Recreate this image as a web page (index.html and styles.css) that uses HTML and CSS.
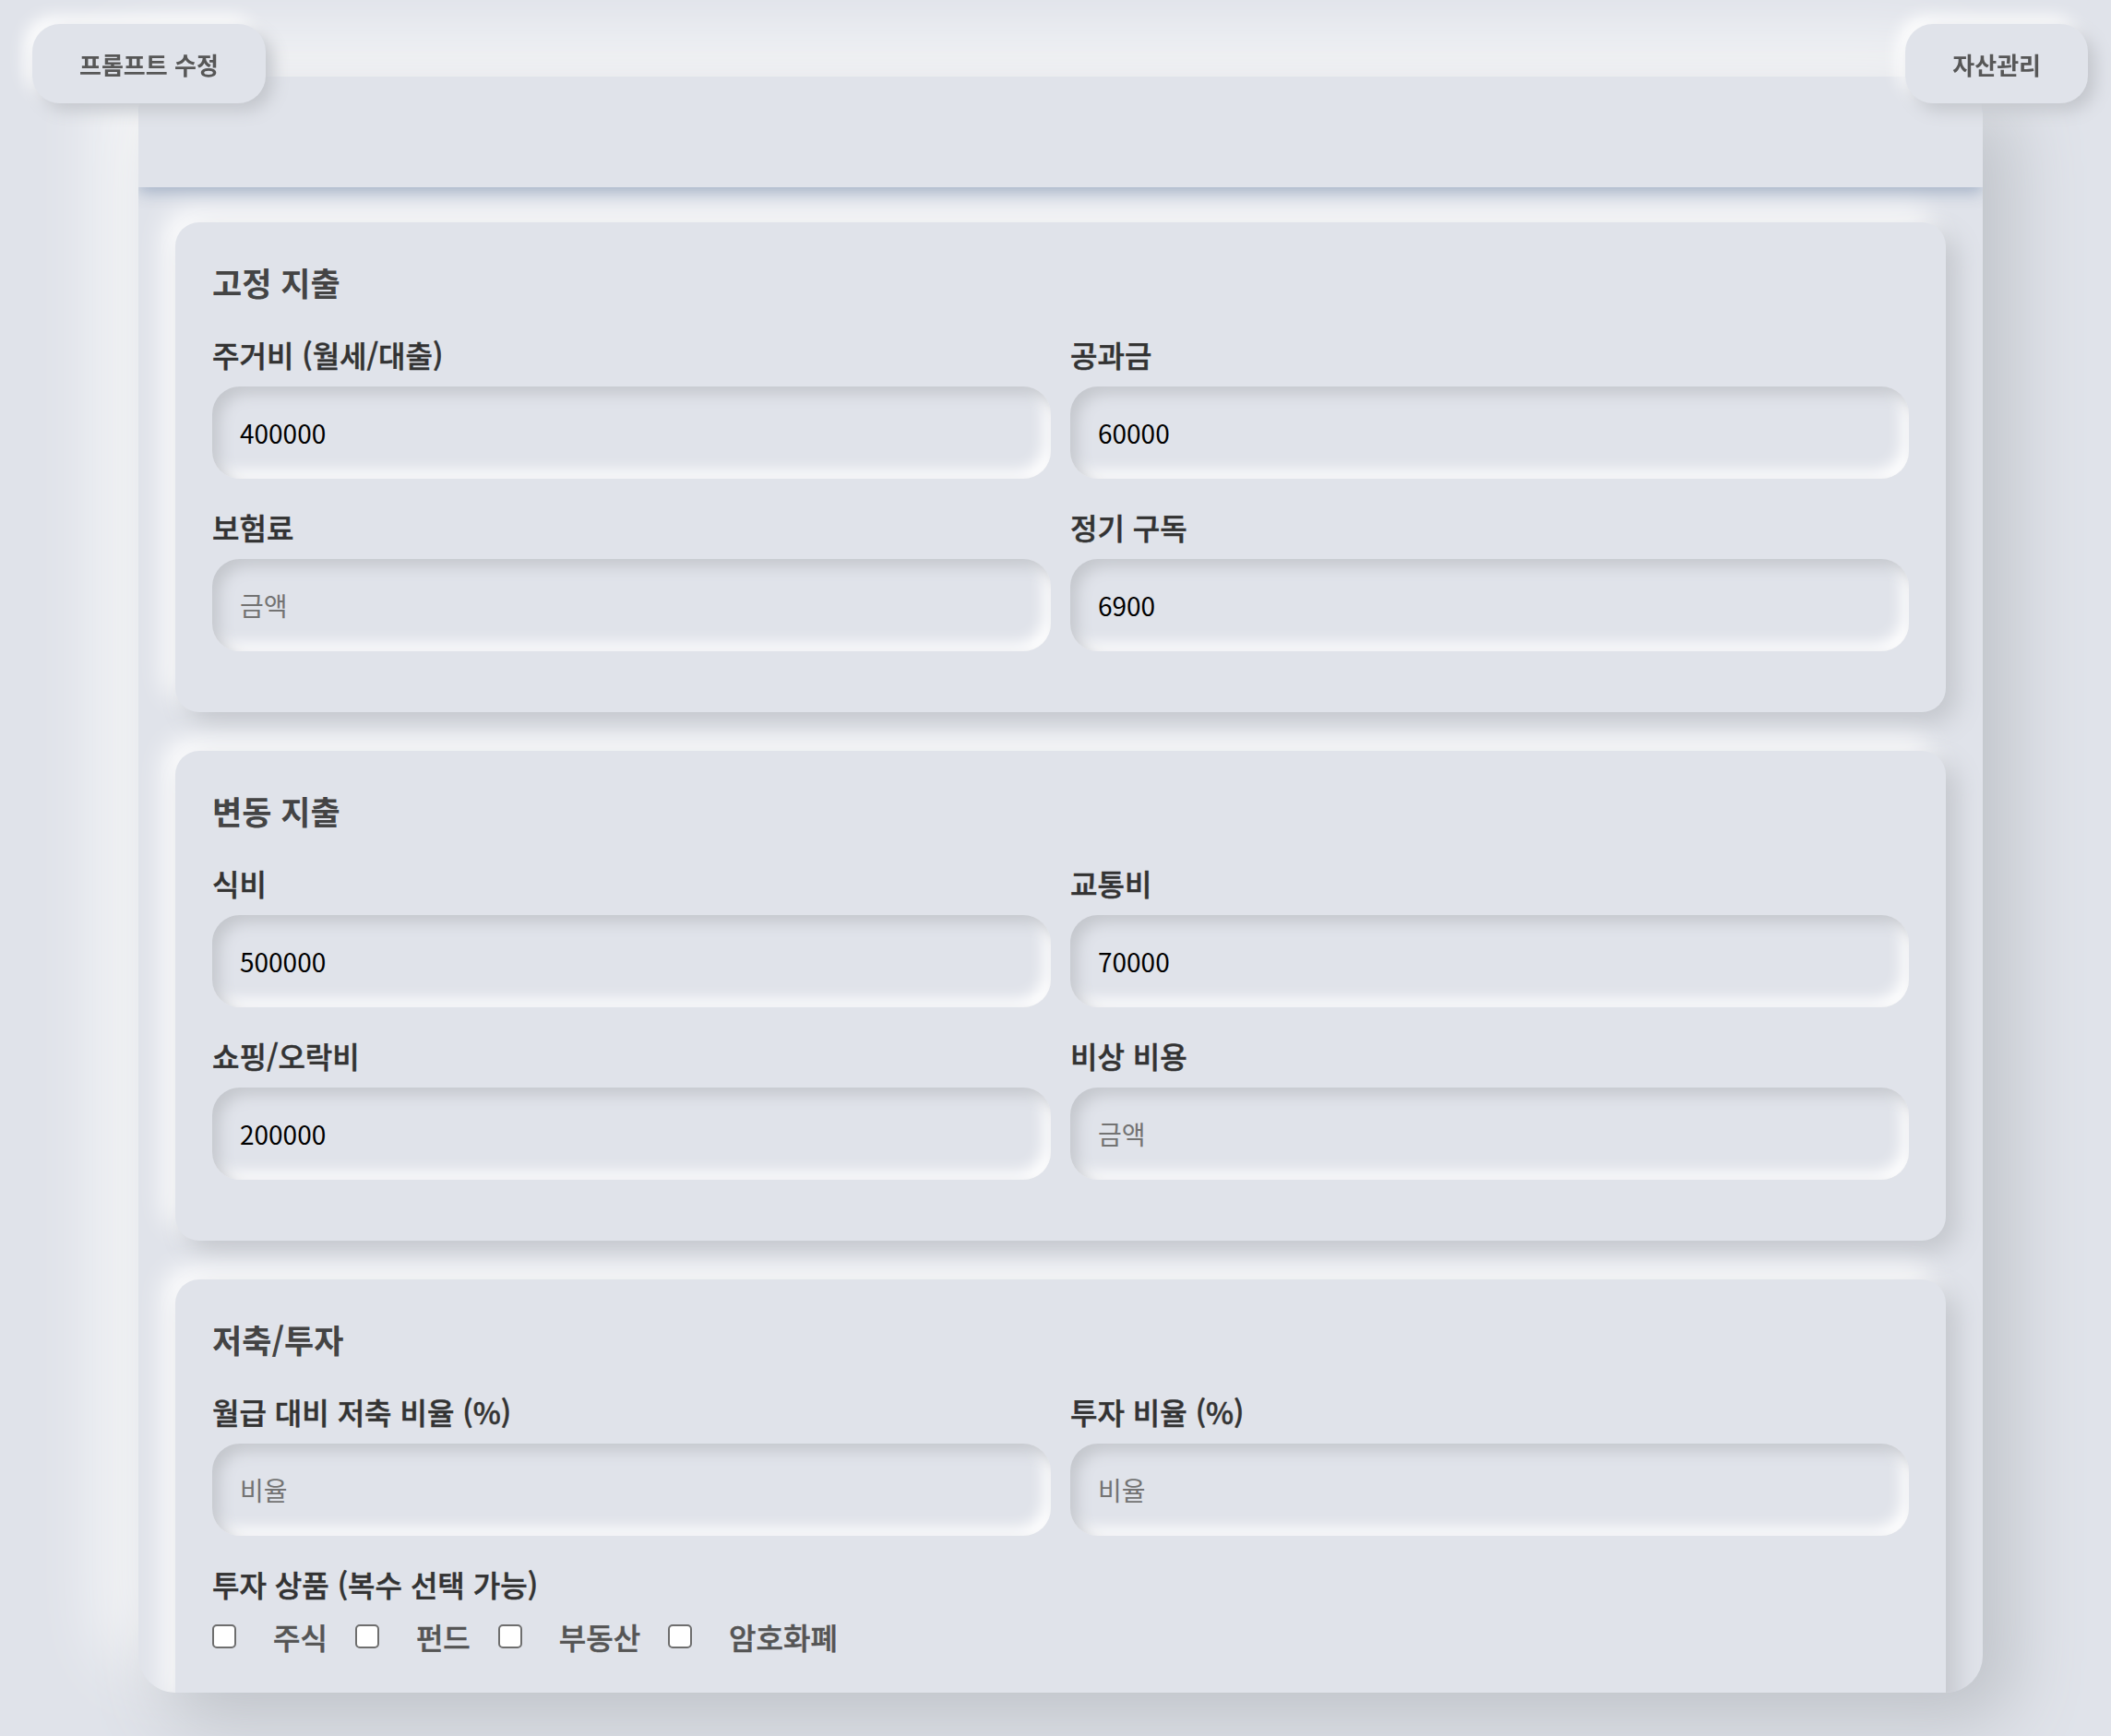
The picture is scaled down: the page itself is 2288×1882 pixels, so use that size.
FILE: index.html
```html
<!DOCTYPE html>
<html lang="ko">
<head>
<meta charset="utf-8">
<title>지출 관리</title>
<link rel="stylesheet" href="styles.css">
</head>
<body>
<button class="nav-btn nav-left" type="button">프롬프트 수정</button>
<button class="nav-btn nav-right" type="button">자산관리</button>
<main class="panel">
  <header class="panel-header"></header>
  <div class="panel-body">
    <section class="card">
      <h3 class="card-title">고정 지출</h3>
      <div class="grid">
        <div class="field">
          <label class="field-label">주거비 (월세/대출)</label>
          <input class="text-input" type="text" value="400000" placeholder="금액">
        </div>
        <div class="field">
          <label class="field-label">공과금</label>
          <input class="text-input" type="text" value="60000" placeholder="금액">
        </div>
        <div class="field">
          <label class="field-label">보험료</label>
          <input class="text-input" type="text" value="" placeholder="금액">
        </div>
        <div class="field">
          <label class="field-label">정기 구독</label>
          <input class="text-input" type="text" value="6900" placeholder="금액">
        </div>
      </div>
    </section>

    <section class="card">
      <h3 class="card-title">변동 지출</h3>
      <div class="grid">
        <div class="field">
          <label class="field-label">식비</label>
          <input class="text-input" type="text" value="500000" placeholder="금액">
        </div>
        <div class="field">
          <label class="field-label">교통비</label>
          <input class="text-input" type="text" value="70000" placeholder="금액">
        </div>
        <div class="field">
          <label class="field-label">쇼핑/오락비</label>
          <input class="text-input" type="text" value="200000" placeholder="금액">
        </div>
        <div class="field">
          <label class="field-label">비상 비용</label>
          <input class="text-input" type="text" value="" placeholder="금액">
        </div>
      </div>
    </section>

    <section class="card">
      <h3 class="card-title">저축/투자</h3>
      <div class="grid">
        <div class="field">
          <label class="field-label">월급 대비 저축 비율 (%)</label>
          <input class="text-input" type="text" value="" placeholder="비율">
        </div>
        <div class="field">
          <label class="field-label">투자 비율 (%)</label>
          <input class="text-input" type="text" value="" placeholder="비율">
        </div>
        <div class="field field-full">
          <label class="field-label">투자 상품 (복수 선택 가능)</label>
          <div class="checks">
            <label class="check"><input class="checkbox" type="checkbox">주식</label>
            <label class="check"><input class="checkbox" type="checkbox">펀드</label>
            <label class="check"><input class="checkbox" type="checkbox">부동산</label>
            <label class="check"><input class="checkbox" type="checkbox">암호화폐</label>
          </div>
        </div>
      </div>
    </section>
  </div>
</main>
</body>
</html>
```
FILE: styles.css
```css
* {
  box-sizing: border-box;
}

html,
body {
  margin: 0;
  height: 100%;
}

body {
  padding-top: 83px;
  background: #e0e3ea;
  font-family: "Noto Sans CJK KR", "Noto Sans", sans-serif;
  overflow: hidden;
}

.nav-btn {
  position: fixed;
  top: 26px;
  z-index: 5;
  height: 86px;
  padding: 0 51px;
  border: none;
  border-radius: 30px;
  background: #e0e3ea;
  font-family: inherit;
  font-size: 26px;
  font-weight: 700;
  color: #575757;
  box-shadow: 8px 8px 18px #c3c6cc, -8px -8px 18px #ffffff;
}

.nav-left {
  left: 35px;
}

.nav-right {
  right: 25px;
}

.panel {
  margin-left: 150px;
  width: 1999px;
  height: 1752px;
  border-radius: 40px;
  background: #e0e3ea;
  overflow: hidden;
  box-shadow: 30px 30px 80px #bdc1c7, -30px -30px 80px #ffffff;
}

.panel-header {
  height: 120px;
  background: #e0e3ea;
  box-shadow: 0 6px 16px rgba(163, 177, 198, 0.95);
}

.panel-body {
  padding: 38px 40px 0;
}

.card {
  margin-bottom: 42px;
  padding: 40px 40px 36px;
  border-radius: 26px;
  background: #e0e3ea;
  box-shadow: 12px 12px 28px #c3c6cc, -12px -12px 28px #ffffff;
}

.card-title {
  margin: 0 0 31px;
  font-size: 35px;
  line-height: 50px;
  font-weight: 700;
  color: #444444;
}

.grid {
  display: grid;
  grid-template-columns: 1fr 1fr;
  column-gap: 21px;
}

.field {
  margin-bottom: 30px;
}

.field-full {
  grid-column: 1 / -1;
}

.field-label {
  display: block;
  margin-bottom: 13px;
  font-size: 32px;
  line-height: 44px;
  font-weight: 500;
  color: #333333;
  -webkit-text-stroke: 0.5px #333333;
}

.text-input {
  display: block;
  width: 100%;
  height: 100px;
  padding: 0 30px;
  border: none;
  outline: none;
  border-radius: 30px;
  background: #e0e3ea;
  font-family: inherit;
  font-size: 28px;
  color: #000000;
  box-shadow: inset 8px 8px 16px #c4c7cd, inset -8px -8px 16px #ffffff;
}

.text-input::placeholder {
  color: #737373;
}

.checks {
  display: flex;
  align-items: center;
  gap: 30px;
  height: 50px;
  margin-top: -3px;
}

.check {
  display: flex;
  align-items: center;
  font-size: 32px;
  font-weight: 500;
  color: #555555;
  -webkit-text-stroke: 0.5px #555555;
}

.checkbox {
  appearance: none;
  -webkit-appearance: none;
  width: 26px;
  height: 26px;
  margin: 0 40px 0 0;
  border: 2px solid #6e6e6e;
  border-radius: 5px;
  background: #ffffff;
}
```
